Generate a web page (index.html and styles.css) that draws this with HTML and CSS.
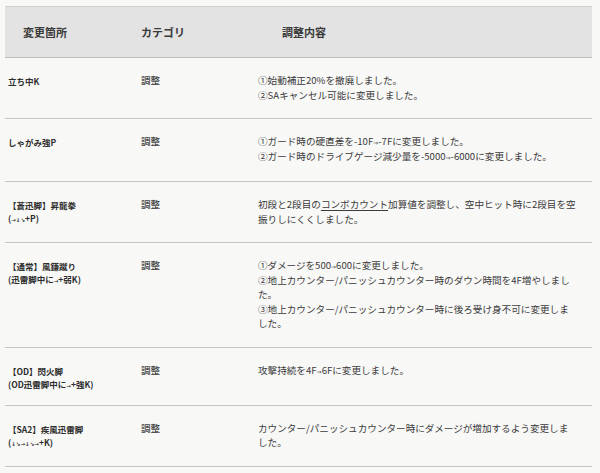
FILE: index.html
```html
<!DOCTYPE html>
<html lang="ja">
<head>
<meta charset="utf-8">
<title>調整内容</title>
<link rel="stylesheet" href="styles.css">
</head>
<body>
<div class="table">
  <div class="row head">
    <div class="c1">変更箇所</div>
    <div class="c2">カテゴリ</div>
    <div class="c3">調整内容</div>
  </div>
  <div class="row">
    <div class="c1">立ち中K</div>
    <div class="c2">調整</div>
    <div class="c3">①始動補正20%を撤廃しました。<br>②SAキャンセル可能に変更しました。</div>
  </div>
  <div class="row r2">
    <div class="c1">しゃがみ強P</div>
    <div class="c2">調整</div>
    <div class="c3">①ガード時の硬直差を-10F<span class="to">⇒</span>-7Fに変更しました。<br>②ガード時のドライブゲージ減少量を-5000<span class="to">⇒</span>-6000に変更しました。</div>
  </div>
  <div class="row">
    <div class="c1">【蒼迅脚】昇龍拳<br>(<span class="ar">→↓↘</span>+P)</div>
    <div class="c2">調整</div>
    <div class="c3">初段と2段目の<span class="ul">コンボカウント</span>加算値を調整し、空中ヒット時に2段目を空振りしにくくしました。</div>
  </div>
  <div class="row">
    <div class="c1">【通常】風鎌蹴り<br>(迅雷脚中に<span class="ar">→</span>+弱K)</div>
    <div class="c2">調整</div>
    <div class="c3">①ダメージを500<span class="to">⇒</span>600に変更しました。<br>②地上カウンター/パニッシュカウンター時のダウン時間を4F増やしました。<br>③地上カウンター/パニッシュカウンター時に後ろ受け身不可に変更しました。</div>
  </div>
  <div class="row r5">
    <div class="c1">【OD】閃火脚<br>(OD迅雷脚中に<span class="ar">→</span>+強K)</div>
    <div class="c2">調整</div>
    <div class="c3">攻撃持続を4F<span class="to">⇒</span>6Fに変更しました。</div>
  </div>
  <div class="row">
    <div class="c1">【SA2】疾風迅雷脚<br>(<span class="ar">↓↘→↓↘→</span>+K)</div>
    <div class="c2">調整</div>
    <div class="c3">カウンター/パニッシュカウンター時にダメージが増加するよう変更しました。</div>
  </div>
</div>
</body>
</html>
```
FILE: styles.css
```css
html, body {
  margin: 0;
  padding: 0;
  background: #f8f8f7;
}
body {
  font-family: "Noto Sans CJK JP", "Noto Sans", sans-serif;
  color: #3a3a3a;
  padding: 6px 8px 0 5px;
}
.table {
  width: 587px;
  border-top: 1px solid #d2d2d2;
}
.row {
  display: grid;
  grid-template-columns: 133px 117px 1fr;
  border-bottom: 1px solid #c6c6c6;
  padding: 15px 0 16px;
}
.row.r2 {
  padding-bottom: 18px;
}
.row.r5 {
  padding-bottom: 14px;
}
.row > div {
  padding-left: 3px;
}
.head {
  background: #e3e3e3;
  height: 50px;
  padding: 0;
  align-items: center;
  border-bottom-color: #bdbdbd;
}
.head .c1 { padding-left: 18px; }
.head .c3 { padding-left: 27px; }
.c1 {
  font-size: 8.5px;
  line-height: 13px;
  font-weight: 700;
  color: #2e2e2e;
  padding-top: 2px;
}
.c2 {
  font-size: 9.6px;
  line-height: 14.5px;
  font-weight: 500;
  color: #444;
}
.c3 {
  font-size: 9.6px;
  line-height: 14.5px;
  color: #3b3b3b;
  padding-right: 15px;
}
.head .c1, .head .c2, .head .c3 {
  font-size: 11px;
  line-height: 14px;
  font-weight: 700;
  color: #3a3a3a;
  padding-top: 0;
}
.ul {
  text-decoration: underline;
  text-underline-offset: 2px;
}
.to {
  font-family: "DejaVu Sans", sans-serif;
  font-size: 6px;
  line-height: 0;
}
.ar {
  font-family: "DejaVu Sans", sans-serif;
  font-size: 5.5px;
  font-weight: 700;
  line-height: 0;
}
```
